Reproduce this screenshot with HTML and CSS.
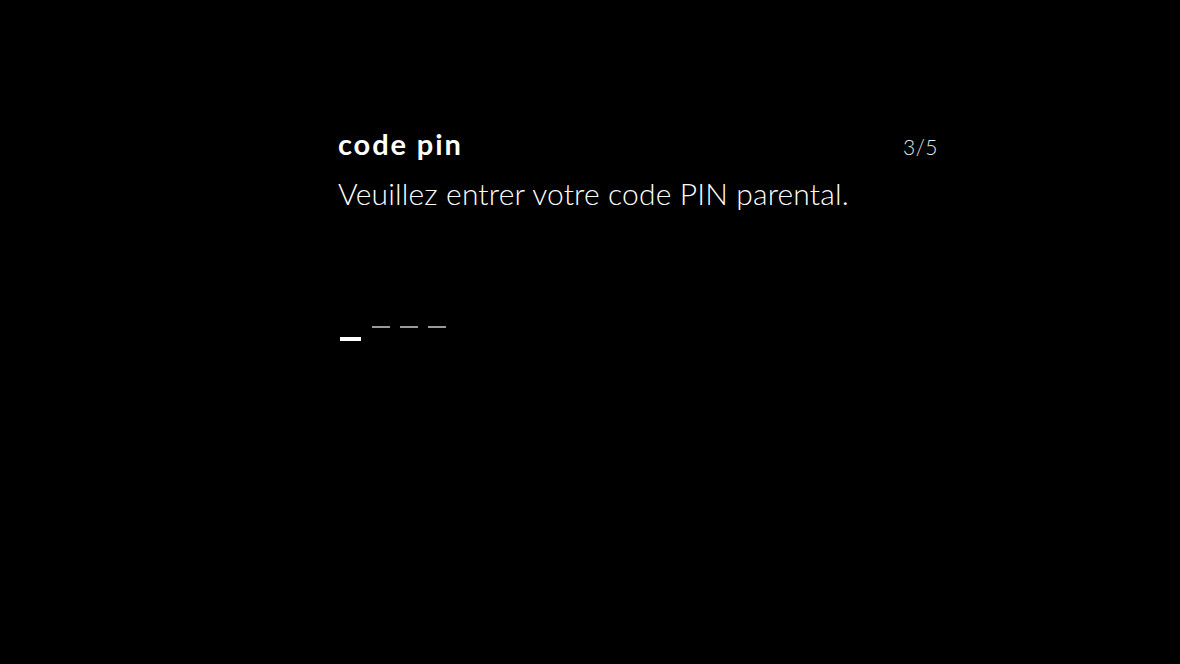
FILE: index.html
```html
<!doctype html>
<html lang="fr">
<head>
    <title>Code PIN</title>
    <link rel="stylesheet" href="styles.css">
</head>
<body>
    <div class="pin-screen">
        <div class="pin-header">
            <div class="pin-title">code pin</div>
            <div class="pin-step">3/5</div>
        </div>
        <div class="pin-text">Veuillez entrer votre code PIN parental.</div>

        <div class="pin-digits">
            <span class="pin-digit active"></span>
            <span class="pin-digit"></span>
            <span class="pin-digit"></span>
            <span class="pin-digit"></span>
        </div>
    </div>
</body>
</html>
```

FILE: styles.css
```css
/* General styles */
body {
    margin: 0;
    padding: 0;
    background-color: #000;
    color: #fff;
    font-family: Lato, "Noto Sans", sans-serif;
    width: 1180px;
    height: 664px;
    overflow: hidden;
}

.pin-screen {
    width: 600px;
    margin-left: 338px;
    padding-top: 125px;
}

.pin-header {
    display: flex;
    justify-content: space-between;
    align-items: baseline;
}

.pin-title {
    font-size: 29px;
    font-weight: 700;
    letter-spacing: 1.9px;
    line-height: 38px;
}

.pin-step {
    font-size: 21px;
    font-weight: 300;
    color: #e8e8e8;
    letter-spacing: 0.5px;
}

.pin-text {
    margin-top: 11px;
    font-size: 30px;
    font-weight: 300;
    letter-spacing: 0.15px;
    line-height: 38px;
}

.pin-digits {
    display: flex;
    align-items: flex-end;
    gap: 10px;
    margin-top: 114px;
    padding-left: 2px;
}

.pin-digit {
    display: block;
    width: 18px;
    height: 2px;
    margin-bottom: 13px;
    background-color: #9a9a9a;
}

.pin-digit.active {
    width: 21px;
    height: 4px;
    margin-bottom: 0;
    margin-right: 1px;
    background-color: #fff;
}
```
